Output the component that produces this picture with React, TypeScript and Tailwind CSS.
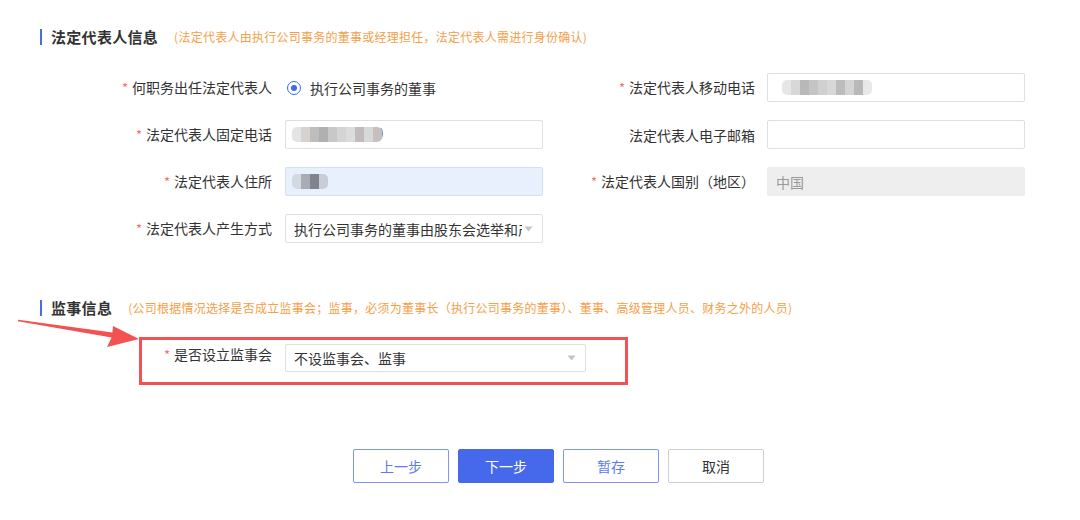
import React from "react";

const font = { fontFamily: '"Noto Sans CJK SC", "Noto Sans", sans-serif' };

function Label({ text, required, className = "" }: { text: string; required?: boolean; className?: string }) {
  return (
    <div className={"text-right text-[14px] text-[#333] leading-[20px] whitespace-nowrap " + className}>
      {required && <span className="text-[#f56c6c] mr-[4px] text-[13px]">*</span>}
      {text}
    </div>
  );
}

function Mosaic({ colors }: { colors: string[] }) {
  return (
    <div className="flex h-[15px] overflow-hidden rounded-[5px] blur-[0.6px]">
      {colors.map((c, i) => (
        <div key={i} className="w-[9px] h-full" style={{ backgroundColor: c }} />
      ))}
    </div>
  );
}

function Caret() {
  return (
    <svg width="9" height="6" viewBox="0 0 9 6" className="shrink-0">
      <path d="M0.5 0.5 L8.5 0.5 L4.5 5.5 Z" fill="#c0c4cc" />
    </svg>
  );
}

function SectionTitle({ title, note }: { title: string; note: string }) {
  return (
    <div className="flex items-center h-[16px] ml-[40px]">
      <div className="w-[2px] h-[16px] bg-[#4a6ee0]" />
      <div className="ml-[9px] text-[15px] font-bold text-[#333] leading-[16px] tracking-[0.3px]">{title}</div>
      <div className="ml-[16px] text-[12px] text-[#f5a048] leading-[16px] whitespace-nowrap tracking-[0.25px]">{note}</div>
    </div>
  );
}

export default function App() {
  const inputBase = "h-[29px] w-[258px] border border-[#dcdfe6] rounded-[2px] bg-white flex items-center";
  return (
    <div className="relative w-[1080px] h-[520px] bg-white overflow-hidden" style={font}>
      <div className="pt-[29px]">
        <SectionTitle
          title="法定代表人信息"
          note="(法定代表人由执行公司事务的董事或经理担任，法定代表人需进行身份确认)"
        />

        <div className="mt-[19px]">
          {/* Row 1 */}
          <div className="flex items-center h-[47px]">
            <Label text="何职务出任法定代表人" required className="w-[272px]" />
            <div className="ml-[15px] w-[256px] flex items-center">
              <div className="w-[14px] h-[14px] rounded-full border border-[#3e6bea] flex items-center justify-center">
                <div className="w-[6px] h-[6px] rounded-full bg-[#3e6bea]" />
              </div>
              <span className="ml-[9px] text-[14px] text-[#333] leading-[20px]">执行公司事务的董事</span>
            </div>
            <Label text="法定代表人移动电话" required className="w-[212px]" />
            <div className={inputBase + " ml-[12px] pl-[14px]"}>
              <Mosaic colors={["#e6e6e6", "#d8d8d8", "#b8b8b8", "#c4c4c4", "#d0d0d0", "#d8d8d8", "#bcbcbc", "#d4d4d4", "#b8b8b8", "#e8e8e8"]} />
            </div>
          </div>

          {/* Row 2 */}
          <div className="flex items-center h-[47px]">
            <Label text="法定代表人固定电话" required className="w-[272px]" />
            <div className={inputBase + " ml-[13px] pl-[6px]"}>
              <Mosaic colors={["#e4e4e4", "#d6d2d0", "#bdbdbd", "#b0b0b0", "#c8c8c8", "#d4d4d4", "#dcdcdc", "#c0bcbc", "#d8d8d8", "#c8c0c0"]} />
              <span className="text-[11px] text-[#555] leading-[12px] -ml-[2px] -mt-[6px]">)</span>
            </div>
            <Label text="法定代表人电子邮箱" className="w-[212px]" />
            <div className={inputBase + " ml-[12px]"} />
          </div>

          {/* Row 3 */}
          <div className="flex items-center h-[47px]">
            <Label text="法定代表人住所" required className="w-[272px]" />
            <div className="ml-[13px] h-[29px] w-[258px] border border-[#d5dff0] rounded-[2px] bg-[#e8f0fe] flex items-center pl-[6px]">
              <Mosaic colors={["#d4d8e0", "#a8acb4", "#80848c", "#c8ccd4"]} />
            </div>
            <Label text="法定代表人国别（地区）" required className="w-[212px]" />
            <div className="ml-[12px] h-[29px] w-[258px] border border-[#ededed] rounded-[2px] bg-[#eeeeee] flex items-center pl-[8px]">
              <span className="text-[14px] text-[#999] leading-[20px]">中国</span>
            </div>
          </div>

          {/* Row 4 */}
          <div className="flex items-center h-[47px]">
            <Label text="法定代表人产生方式" required className="w-[272px]" />
            <div className={inputBase + " ml-[13px] pl-[8px] pr-[9px]"}>
              <div className="flex-1 overflow-hidden whitespace-nowrap text-[14px] text-[#333] leading-[20px] mr-[2px]">
                执行公司事务的董事由股东会选举和产生
              </div>
              <Caret />
            </div>
          </div>
        </div>

        <div className="mt-[48px]">
          <SectionTitle
            title="监事信息"
            note="(公司根据情况选择是否成立监事会；监事，必须为董事长（执行公司事务的董事）、董事、高级管理人员、财务之外的人员)"
          />
        </div>

        <div className="mt-[21px] ml-[139px] w-[489px] h-[48px] border-[3px] border-[#f45252] flex items-start pt-[4px]">
          <Label text="是否设立监事会" required className="w-[130px] leading-[18px]" />
          <div className="ml-[13px] h-[28px] w-[301px] border border-[#dcdfe6] rounded-[2px] bg-white flex items-center pl-[8px] pr-[9px]">
            <div className="flex-1 text-[14px] text-[#333] leading-[20px] whitespace-nowrap">不设监事会、监事</div>
            <Caret />
          </div>
        </div>

        <div className="mt-[64px] ml-[353px] flex gap-[9px]">
          <button className="w-[96px] h-[34px] border border-[#7d96f2] rounded-[2px] bg-white text-[14px] text-[#5b7cf0]">上一步</button>
          <button className="w-[96px] h-[34px] border border-[#4569ea] rounded-[2px] bg-[#4569ea] text-[14px] text-white">下一步</button>
          <button className="w-[96px] h-[34px] border border-[#7d96f2] rounded-[2px] bg-white text-[14px] text-[#5b7cf0]">暂存</button>
          <button className="w-[96px] h-[34px] border border-[#cfcfcf] rounded-[2px] bg-white text-[14px] text-[#333]">取消</button>
        </div>
      </div>

      {/* red annotation arrow */}
      <svg className="absolute left-0 top-0 pointer-events-none" width="1080" height="520">
        <polygon
          points="18.1,319.7 112.4,332.6 113,326 139,339 107,347 111.6,337.6 17.9,321.3"
          fill="#f45252"
        />
      </svg>
    </div>
  );
}
